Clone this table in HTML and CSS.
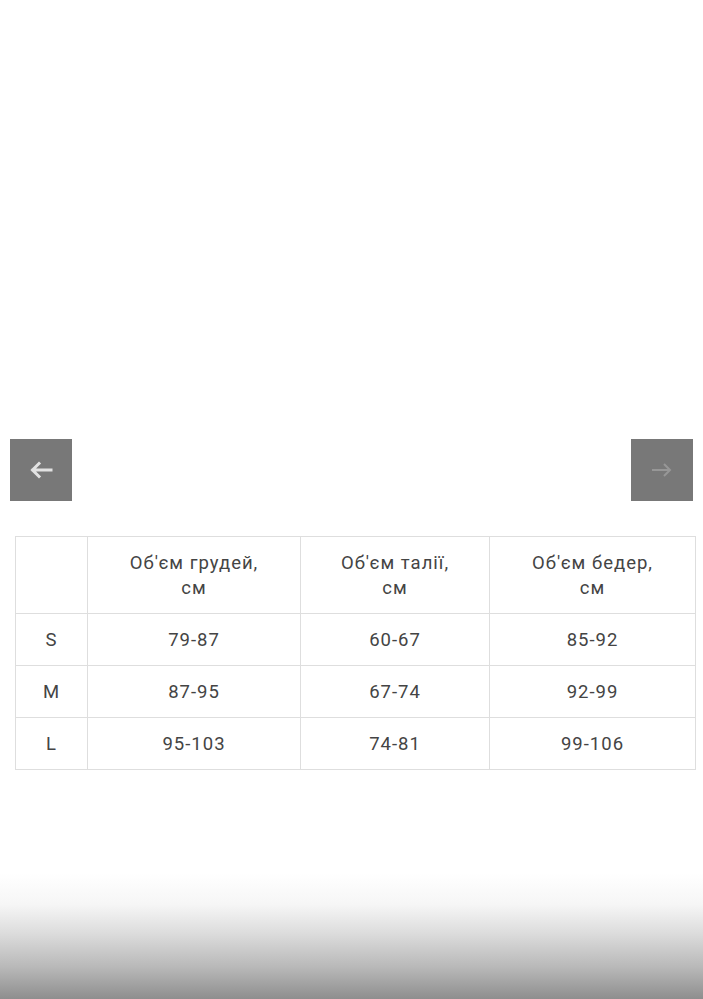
FILE: index.html
```html
<!DOCTYPE html>
<html lang="uk">
<head>
<meta charset="utf-8">
<title>Розмірна сітка</title>
<link rel="stylesheet" href="styles.css">
</head>
<body>
<div class="page">
  <div class="media"></div>
  <div class="slider-nav">
    <button class="nav-btn prev" aria-label="Назад">
      <svg width="24" height="18" viewBox="0 0 24 18"><path d="M22 9H4M10 2.5L3.5 9L10 15.5" fill="none" stroke="#e2e2e2" stroke-width="3" stroke-linecap="square"/></svg>
    </button>
    <button class="nav-btn next" aria-label="Вперед">
      <svg width="24" height="18" viewBox="0 0 24 18"><path d="M2 9H20M14 3L20 9L14 15" fill="none" stroke="#979797" stroke-width="2"/></svg>
    </button>
  </div>
  <table class="sizes">
    <thead>
      <tr>
        <th class="c-size"></th>
        <th class="c-a">Об'єм грудей,<br>см</th>
        <th class="c-b">Об'єм талії,<br>см</th>
        <th class="c-c">Об'єм бедер,<br>см</th>
      </tr>
    </thead>
    <tbody>
      <tr><td>S</td><td>79-87</td><td>60-67</td><td>85-92</td></tr>
      <tr><td>M</td><td>87-95</td><td>67-74</td><td>92-99</td></tr>
      <tr><td>L</td><td>95-103</td><td>74-81</td><td>99-106</td></tr>
    </tbody>
  </table>
  <div class="fade"></div>
</div>
</body>
</html>
```

FILE: styles.css
```css
html, body {
  margin: 0;
  padding: 0;
  background: #ffffff;
}
.page {
  height: 999px;
  display: flex;
  flex-direction: column;
  overflow: hidden;
  font-family: Roboto, "Noto Sans", sans-serif;
  color: #444444;
}
.media {
  height: 439px;
  flex: none;
}
.slider-nav {
  display: flex;
  justify-content: space-between;
  padding: 0 10px 0 10px;
  flex: none;
}
.nav-btn {
  width: 62px;
  height: 62px;
  border: 0;
  padding: 0;
  margin: 0;
  background: #787878;
  display: flex;
  align-items: center;
  justify-content: center;
}
.sizes {
  margin: 35px 0 0 15px;
  width: 681px;
  border-collapse: collapse;
  table-layout: fixed;
  flex: none;
  font-size: 18.5px;
  letter-spacing: 1px;
}
.sizes th, .sizes td {
  border: 1px solid #dedede;
  text-align: center;
  font-weight: 400;
  padding: 0;
}
.sizes th {
  height: 74px;
  line-height: 25px;
  padding-top: 2px;
}
.sizes td {
  height: 50px;
  padding-top: 1px;
}
.c-size { width: 71px; }
.c-a { width: 212px; }
.c-b { width: 188px; }
.fade {
  margin-top: auto;
  height: 126px;
  flex: none;
  background: linear-gradient(to bottom, rgba(255,255,255,0) 0%, #f6f6f6 25%, #dcdcdc 48%, #b8b8b8 75%, #8e8e8e 100%);
}
```
